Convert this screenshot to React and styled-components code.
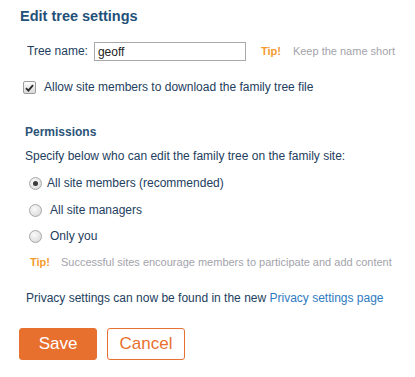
import React from 'react'
import styled, { createGlobalStyle } from 'styled-components'

const Global = createGlobalStyle`
  body {
    margin: 0;
    background: #fff;
    font-family: "Liberation Sans", Arial, sans-serif;
    color: #23405e;
  }
`

const Page = styled.div`
  width: 415px;
  height: 377px;
  padding: 7px 0 0 20px;
  box-sizing: border-box;
  font-size: 12px;
  line-height: 15px;
`

const Title = styled.h1`
  margin: 0;
  font-size: 14.5px;
  font-weight: bold;
  color: #1f5179;
  line-height: 18px;
`

const NameRow = styled.div`
  display: flex;
  align-items: center;
  margin: 17px 0 0 7px;
`

const Label = styled.label`
  margin-right: 6px;
`

const TextInput = styled.input`
  width: 152px;
  height: 19px;
  box-sizing: border-box;
  border: 1px solid #a9a9a9;
  padding: 0 3px;
  font-family: inherit;
  font-size: 12px;
  color: #222;
  outline: none;
`

const Tip = styled.span`
  color: #f39a2e;
  font-weight: bold;
  font-size: 11px;
  margin: ${p => p.$gap || '0 12px 0 15px'};
`

const TipText = styled.span`
  color: #a3a3ab;
  font-size: 11px;
`

const CheckRow = styled.div`
  display: flex;
  align-items: center;
  margin: 19px 0 0 3px;
`

const Box = styled.span`
  width: 11px;
  height: 11px;
  border: 1px solid #9c9c9c;
  border-radius: 2px;
  background: linear-gradient(#fdfdfd, #d9d9d9);
  display: flex;
  align-items: center;
  justify-content: center;
  margin-right: 8px;
`

const Section = styled.div`
  margin: 30px 0 0 5px;
`

const SubTitle = styled.h2`
  margin: 0;
  font-size: 12px;
  line-height: 15px;
  font-weight: bold;
  color: #2b5378;
`

const Intro = styled.p`
  margin: 9px 0 0;
`

const RadioList = styled.div`
  display: flex;
  flex-direction: column;
  gap: 11.5px;
  margin: 12px 0 0 4px;
`

const RadioRow = styled.div`
  display: flex;
  align-items: center;
  height: 15px;
`

const Radio = styled.span`
  width: 11px;
  height: 11px;
  border-radius: 50%;
  border: 1px solid #a8a8a8;
  background: radial-gradient(circle at 40% 35%, #fafafa, #d4d4d4);
  display: flex;
  align-items: center;
  justify-content: center;
  margin-right: ${p => (p.$checked ? '5px' : '8px')};

  &::after {
    content: '';
    display: ${p => (p.$checked ? 'block' : 'none')};
    width: 5px;
    height: 5px;
    border-radius: 50%;
    background: #3a3a3a;
  }
`

const TipLine = styled.div`
  margin: 11px 0 0 10px;
`

const Privacy = styled.p`
  margin: 21px 0 0 6px;
`

const Link = styled.a`
  color: #2e7bbf;
  text-decoration: none;
`

const Buttons = styled.div`
  display: flex;
  gap: 10px;
  margin: 22px 0 0 -1px;
`

const Button = styled.button`
  width: 78px;
  height: 32px;
  border-radius: 3px;
  font-family: inherit;
  font-size: 17px;
  border: 1px solid #e8702f;
  background: ${p => (p.$primary ? '#e8702f' : '#fff')};
  color: ${p => (p.$primary ? '#fff' : '#e8702f')};
  cursor: pointer;
`

export default function App() {
  return (
    <>
      <Global />
      <Page>
        <Title>Edit tree settings</Title>
        <NameRow>
          <Label>Tree name:</Label>
          <TextInput defaultValue="geoff" />
          <Tip>Tip!</Tip>
          <TipText>Keep the name short</TipText>
        </NameRow>
        <CheckRow>
          <Box>
            <svg width="9" height="8" viewBox="0 0 9 8">
              <path d="M1 4.2 L3.4 6.6 L8 1.2" fill="none" stroke="#2a2a2a" strokeWidth="1.8" />
            </svg>
          </Box>
          Allow site members to download the family tree file
        </CheckRow>
        <Section>
          <SubTitle>Permissions</SubTitle>
          <Intro>Specify below who can edit the family tree on the family site:</Intro>
          <RadioList>
            <RadioRow><Radio $checked />All site members (recommended)</RadioRow>
            <RadioRow><Radio />All site managers</RadioRow>
            <RadioRow><Radio />Only you</RadioRow>
          </RadioList>
        </Section>
        <TipLine>
          <Tip $gap="0 11px 0 0">Tip!</Tip>
          <TipText>Successful sites encourage members to participate and add content</TipText>
        </TipLine>
        <Privacy>
          Privacy settings can now be found in the new <Link href="#">Privacy settings page</Link>
        </Privacy>
        <Buttons>
          <Button $primary>Save</Button>
          <Button>Cancel</Button>
        </Buttons>
      </Page>
    </>
  )
}
